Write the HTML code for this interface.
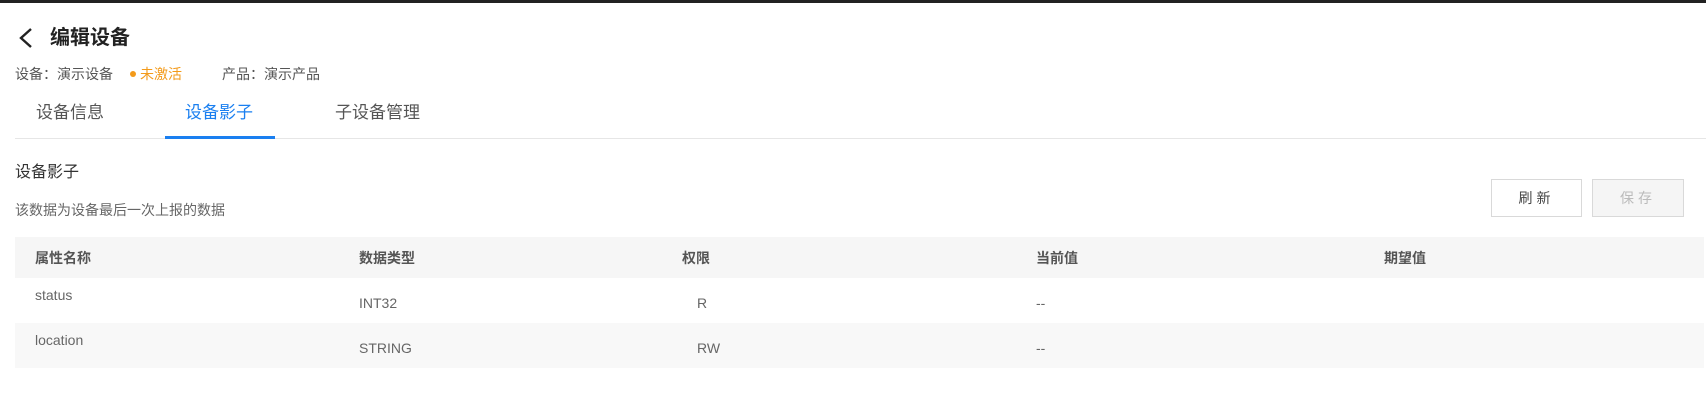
<!DOCTYPE html>
<html><head><meta charset="utf-8"><style>
*{margin:0;padding:0;box-sizing:border-box}
body{width:1706px;height:400px;background:#fff;font-family:"Liberation Sans","Noto Sans CJK SC",sans-serif;position:relative;overflow:hidden;color:#333}
.a{position:absolute;white-space:nowrap}
</style></head><body>
<div class="a" style="left:0;top:0;width:1706px;height:3px;background:#222"></div>
<svg class="a" style="left:17px;top:27px" width="18" height="22" viewBox="0 0 18 22"><path d="M14 2 L4 11 L14 20" fill="none" stroke="#222" stroke-width="2.4"/></svg>
<div class="a" style="left:50px;top:25px;font-size:20px;font-weight:bold;color:#222;line-height:26px">编辑设备</div>
<div class="a" style="left:15px;top:64px;font-size:14px;color:#555;line-height:20px">设备：演示设备</div>
<div class="a" style="left:130px;top:71px;width:6px;height:6px;border-radius:3px;background:#f39a1a"></div>
<div class="a" style="left:140px;top:64px;font-size:14px;color:#f39a1a;line-height:20px">未激活</div>
<div class="a" style="left:222px;top:64px;font-size:14px;color:#555;line-height:20px">产品：演示产品</div>
<div class="a" style="left:36px;top:102px;font-size:17px;color:#555;line-height:22px">设备信息</div>
<div class="a" style="left:185px;top:102px;font-size:17px;color:#1a7ff0;line-height:22px">设备影子</div>
<div class="a" style="left:335px;top:102px;font-size:17px;color:#555;line-height:22px">子设备管理</div>
<div class="a" style="left:15px;top:138px;width:1691px;height:1px;background:#e6e6e6"></div>
<div class="a" style="left:165px;top:136px;width:110px;height:3px;background:#1a7ff0"></div>
<div class="a" style="left:15px;top:162px;font-size:16px;color:#333;line-height:22px">设备影子</div>
<div class="a" style="left:15px;top:200px;font-size:14px;color:#666;line-height:20px">该数据为设备最后一次上报的数据</div>
<div class="a" style="left:1491px;top:179px;width:91px;height:38px;border:1px solid #d9d9d9;background:#fff;font-size:14px;color:#444;text-align:center;line-height:36px;letter-spacing:4px">刷新</div>
<div class="a" style="left:1592px;top:179px;width:92px;height:38px;border:1px solid #d9d9d9;background:#f5f5f5;font-size:14px;color:#bbb;text-align:center;line-height:36px;letter-spacing:4px">保存</div>
<div class="a" style="left:15px;top:237px;width:1689px;height:41px;background:#f6f6f6"></div>
<div class="a" style="left:15px;top:323px;width:1689px;height:45px;background:#f8f8f8"></div>
<div class="a" style="left:35px;top:249px;font-size:14px;font-weight:bold;color:#555;line-height:18px">属性名称</div>
<div class="a" style="left:359px;top:249px;font-size:14px;font-weight:bold;color:#555;line-height:18px">数据类型</div>
<div class="a" style="left:682px;top:249px;font-size:14px;font-weight:bold;color:#555;line-height:18px">权限</div>
<div class="a" style="left:1036px;top:249px;font-size:14px;font-weight:bold;color:#555;line-height:18px">当前值</div>
<div class="a" style="left:1384px;top:249px;font-size:14px;font-weight:bold;color:#555;line-height:18px">期望值</div>
<div class="a" style="left:35px;top:286px;font-size:14px;color:#666;line-height:18px">status</div>
<div class="a" style="left:359px;top:294px;font-size:14px;color:#666;line-height:18px">INT32</div>
<div class="a" style="left:697px;top:294px;font-size:14px;color:#666;line-height:18px">R</div>
<div class="a" style="left:1036px;top:294px;font-size:14px;color:#666;line-height:18px">--</div>
<div class="a" style="left:35px;top:331px;font-size:14px;color:#666;line-height:18px">location</div>
<div class="a" style="left:359px;top:339px;font-size:14px;color:#666;line-height:18px">STRING</div>
<div class="a" style="left:697px;top:339px;font-size:14px;color:#666;line-height:18px">RW</div>
<div class="a" style="left:1036px;top:339px;font-size:14px;color:#666;line-height:18px">--</div>
</body></html>
